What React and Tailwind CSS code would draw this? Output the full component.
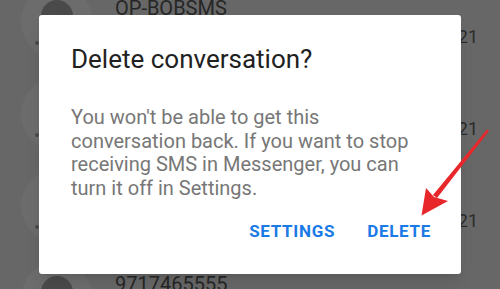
import React from 'react';

const rows = [
  { name: 'OP-BOBSMS', time: '21' },
  { name: '', time: '21' },
  { name: '', time: '21' },
  { name: '9717465555', time: '' },
];

const Avatar = () => (
  <svg width="72" height="72" viewBox="0 0 72 72" className="shrink-0">
    <circle cx="36" cy="36" r="36" fill="#6c6c6c" />
    <circle cx="36" cy="30" r="16" fill="#4a4a4a" />
    <circle cx="16" cy="57" r="2" fill="#4a4a4a" />
  </svg>
);

export default function App() {
  return (
    <div
      className="relative w-[500px] h-[289px] overflow-hidden bg-[#676767]"
      style={{ fontFamily: 'Roboto, "Noto Sans", sans-serif' }}
    >
      {/* dimmed conversation list behind the dialog */}
      <div className="-mt-[14px]">
        {rows.map((r, i) => (
          <div key={i} className="flex items-start h-[92px]">
            <div className="ml-[21px]">
              <Avatar />
            </div>
            <div className="ml-[22px] flex-1 pt-[10px] text-[20px] leading-[24px] text-[#262626]">
              {r.name}
            </div>
            <div className="pr-[22px] pt-[39px] text-[18px] leading-[24px] text-[#2b2b2b]">
              {r.time}
            </div>
          </div>
        ))}
      </div>

      {/* dialog */}
      <div className="absolute left-[39px] top-[15px] w-[422px] h-[259px] bg-white rounded-[3px] shadow-lg flex flex-col">
        <div className="px-[32px] pt-[29px] text-[26px] leading-[30px] text-[#212121]">
          Delete conversation?
        </div>
        <p className="pl-[32px] pr-[30px] mt-[32px] text-[20px] leading-[23.5px] text-[#777777]">
          You won't be able to get this conversation back. If you want to stop receiving SMS in Messenger, you can turn it off in Settings.
        </p>
        <div className="flex justify-end gap-[32px] pr-[30px] mt-[21px] text-[17px] leading-[20px] font-bold tracking-[0.7px] text-[#1a7ae6]">
          <span>SETTINGS</span>
          <span>DELETE</span>
        </div>
      </div>

      {/* red annotation arrow */}
      <svg className="absolute inset-0" width="500" height="289" viewBox="0 0 500 289">
        <polygon points="487,129.5 489,131 437,198 433,195" fill="#e8272b" />
        <polygon points="421.5,215.5 426,188 434,197 448,201" fill="#e8272b" />
      </svg>
    </div>
  );
}
